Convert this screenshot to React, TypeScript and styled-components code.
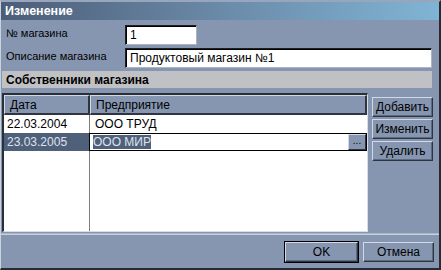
import React from "react";
import styled, { createGlobalStyle } from "styled-components";

const GlobalStyle = createGlobalStyle`
  html, body {
    margin: 0;
    padding: 0;
    background: #ffffff;
  }
  * {
    box-sizing: border-box;
  }
`;

const slate = "#8696b0";
const slateDark = "#4f607b";
const light = "#d2d9e4";
const shadow = "#2f3540";

const Window = styled.div`
  width: 441px;
  height: 270px;
  background: ${slate};
  border-top: 2px solid #97a6bd;
  border-left: 1px solid #c9d1dd;
  border-right: 2px solid #262b33;
  border-bottom: 2px solid #262b33;
  display: flex;
  flex-direction: column;
  font-family: "Liberation Sans", Arial, sans-serif;
  font-size: 11px;
  color: #000;
`;

const TitleBar = styled.div`
  height: 18px;
  flex: none;
  display: flex;
  align-items: center;
  padding-left: 4px;
  background: linear-gradient(to right, #4c5d78 0%, #6a8aa8 50%, #80b4d4 100%);
  color: #ffffff;
  font-weight: bold;
  font-size: 12.5px;
`;

const Form = styled.div`
  display: grid;
  grid-template-columns: 119px 1fr;
  row-gap: 3px;
  padding: 5px 7px 0 5px;
`;

const Label = styled.div`
  align-self: start;
  line-height: 14px;
  padding-top: 1px;
  white-space: nowrap;
`;

const Input = styled.div<{ $width?: number }>`
  height: 20px;
  width: ${(p) => (p.$width ? `${p.$width}px` : "auto")};
  background: #ffffff;
  border: 1px solid #1c1f24;
  border-right-color: #aab4c4;
  border-bottom-color: #aab4c4;
  box-shadow: inset 1px 1px 0 #000;
  display: flex;
  align-items: center;
  padding-left: 4px;
  font-size: 12px;
  white-space: nowrap;
`;

const SectionHeader = styled.div`
  margin: 3px 7px 0 1px;
  height: 17px;
  background: #c0c1c4;
  display: flex;
  align-items: center;
  padding-left: 4px;
  font-weight: bold;
  font-size: 12px;
`;

const Body = styled.div`
  flex: 1;
  display: flex;
  gap: 4px;
  margin: 5px 6px 0 1px;
  min-height: 0;
`;

const Grid = styled.div`
  width: 367px;
  display: flex;
  flex-direction: column;
  border-top: 2px solid #2b3038;
  border-left: 2px solid #2b3038;
  border-right: 1px solid #d8dee8;
  border-bottom: 1px solid #d8dee8;
  background: #ffffff;
  margin-bottom: 1px;
`;

const GridRow = styled.div<{ $fill?: boolean }>`
  display: grid;
  grid-template-columns: 86px 1fr;
  flex: ${(p) => (p.$fill ? 1 : "none")};
`;

const HeadCell = styled.div`
  height: 20px;
  background: ${slate};
  border-top: 1px solid ${light};
  border-left: 1px solid ${light};
  border-right: 2px solid ${shadow};
  border-bottom: 2px solid ${shadow};
  display: flex;
  align-items: center;
  padding-left: 5px;
  font-size: 12px;
`;

const Cell = styled.div<{ $first?: boolean; $selected?: boolean }>`
  height: ${(p) => (p.$first ? "auto" : "18px")};
  min-height: 18px;
  display: flex;
  align-items: center;
  padding-left: 3px;
  font-size: 12px;
  background: ${(p) => (p.$selected ? slateDark : "#ffffff")};
  color: ${(p) => (p.$selected ? "#dfe4ec" : "#000")};
  border-right: 1px solid #7d7d7d;
`;

const BlankCell = styled.div<{ $divider?: boolean }>`
  background: #ffffff;
  border-right: ${(p) => (p.$divider ? "1px solid #7d7d7d" : "none")};
`;

const Editor = styled.div`
  height: 18px;
  margin-left: -1px;
  border: 1px solid #000;
  background: #ffffff;
  display: flex;
  align-items: stretch;
`;

const EditorText = styled.div`
  flex: 1;
  display: flex;
  align-items: center;
  padding-left: 3px;
  font-size: 12px;
`;

const Selection = styled.span`
  background: ${slateDark};
  color: #dfe4ec;
  line-height: 14px;
`;

const EllipsisButton = styled.div`
  width: 18px;
  background: ${slate};
  border-top: 1px solid ${light};
  border-left: 1px solid ${light};
  border-right: 1px solid ${shadow};
  border-bottom: 1px solid ${shadow};
  display: flex;
  align-items: center;
  justify-content: center;
  font-size: 10px;
  line-height: 10px;
  padding-bottom: 2px;
`;

const SideButtons = styled.div`
  display: flex;
  flex-direction: column;
  gap: 2px;
  padding-top: 4px;
`;

const Button = styled.div<{ $width: number; $default?: boolean }>`
  width: ${(p) => p.$width}px;
  height: 20px;
  background: ${slate};
  border-top: 1px solid ${light};
  border-left: 1px solid ${light};
  border-right: 1px solid ${shadow};
  border-bottom: 1px solid ${shadow};
  box-shadow: ${(p) =>
    p.$default ? "0 0 0 1px #000, inset -1px -1px 0 #5d6a80" : "inset -1px -1px 0 #5d6a80"};
  display: flex;
  align-items: center;
  justify-content: center;
  font-size: 12px;
`;

const Separator = styled.div`
  height: 2px;
  margin: 0 0 0 0;
  border-top: 1px solid #a9b5c8;
  border-bottom: 1px solid #c9d1dd;
`;

const Footer = styled.div`
  display: flex;
  justify-content: flex-end;
  gap: 5px;
  padding: 7px 5px 6px 0;
`;

export default function App() {
  return (
    <>
      <GlobalStyle />
      <Window>
        <TitleBar>Изменение</TitleBar>
        <Form>
          <Label>№ магазина</Label>
          <Input $width={72}>1</Input>
          <Label>Описание магазина</Label>
          <Input>Продуктовый магазин №1</Input>
        </Form>
        <SectionHeader>Собственники магазина</SectionHeader>
        <Body>
          <Grid>
            <GridRow>
              <HeadCell>Дата</HeadCell>
              <HeadCell>Предприятие</HeadCell>
            </GridRow>
            <GridRow>
              <Cell>22.03.2004</Cell>
              <Cell style={{ borderRight: "none", paddingLeft: 5 }}>ООО ТРУД</Cell>
            </GridRow>
            <GridRow>
              <Cell $selected>23.03.2005</Cell>
              <Editor>
                <EditorText>
                  <Selection>ООО МИР</Selection>
                </EditorText>
                <EllipsisButton>...</EllipsisButton>
              </Editor>
            </GridRow>
            <GridRow $fill>
              <BlankCell $divider />
              <BlankCell />
            </GridRow>
          </Grid>
          <SideButtons>
            <Button $width={61}>Добавить</Button>
            <Button $width={61}>Изменить</Button>
            <Button $width={61}>Удалить</Button>
          </SideButtons>
        </Body>
        <Separator />
        <Footer>
          <Button $width={73} $default>
            OK
          </Button>
          <Button $width={71}>Отмена</Button>
        </Footer>
      </Window>
    </>
  );
}
